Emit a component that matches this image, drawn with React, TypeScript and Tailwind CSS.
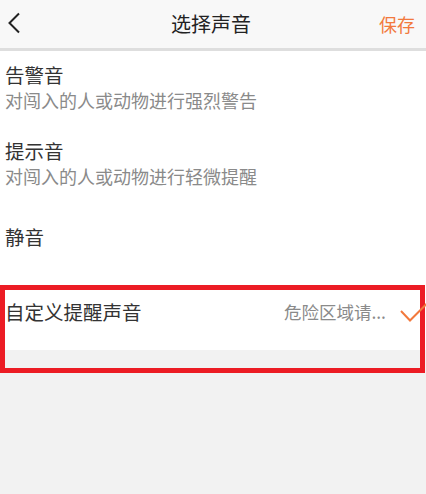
const FONT = "font-['Noto_Sans_CJK_SC','Noto_Sans',sans-serif]";

const ITEMS = [
  { title: "告警音", desc: "对闯入的人或动物进行强烈警告" },
  { title: "提示音", desc: "对闯入的人或动物进行轻微提醒" },
];

export default function App() {
  return (
    <div className={`relative min-h-[494px] w-[426px] overflow-hidden bg-[#f2f2f2] text-[#333] ${FONT}`}>
      {/* header */}
      <header className="flex h-[51px] items-center border-b-[3px] border-[#dedede] bg-[#f8f8f8] pl-[7px] pr-[11px]">
        <div className="w-[80px]">
          <svg width="14" height="22" viewBox="0 0 14 22" className="mb-[2px]" aria-hidden="true">
            <path d="M12 1.5 L2.5 11 L12 20.5" fill="none" stroke="#222" strokeWidth="2" />
          </svg>
        </div>
        <h1 className="flex-1 text-center text-[20px] leading-[26px] text-[#222]">选择声音</h1>
        <div className="flex w-[80px] justify-end">
          <button className="text-[18px] leading-[24px] text-[#f2793d]">保存</button>
        </div>
      </header>

      {/* list */}
      <div className="bg-white">
        {ITEMS.map(({ title, desc }) => (
          <div key={title} className="px-[5px] pb-[15px] pt-[11px]">
            <div className="text-[19.5px] leading-[26px]">{title}</div>
            <div className="text-[18px] leading-[24px] text-[#8a8a8a]">{desc}</div>
          </div>
        ))}
        <div className="flex h-[68px] items-center px-[5px] text-[19.5px]">静音</div>
      </div>

      {/* custom sound */}
      <div className="flex items-center justify-between bg-white pb-[25px] pl-[5px] pt-[28px]">
        <span className="text-[19.5px] leading-[26px]">自定义提醒声音</span>
        <div className="flex items-center">
          <span className="text-[17.5px] leading-[24px] text-[#8a8a8a]">危险区域请...</span>
          <svg width="28" height="20" viewBox="0 0 28 20" className="relative z-10 ml-[14px] -mr-[2px] mt-[2px]" aria-hidden="true">
            <path d="M1 8 L10 17.5 L27 0.5" fill="none" stroke="#f2793d" strokeWidth="2" />
          </svg>
        </div>
      </div>

      {/* highlight frame */}
      <div className="pointer-events-none absolute left-0 top-[285px] h-[88px] w-[425px] border-[5px] border-[#ec1c24]" />
    </div>
  );
}
